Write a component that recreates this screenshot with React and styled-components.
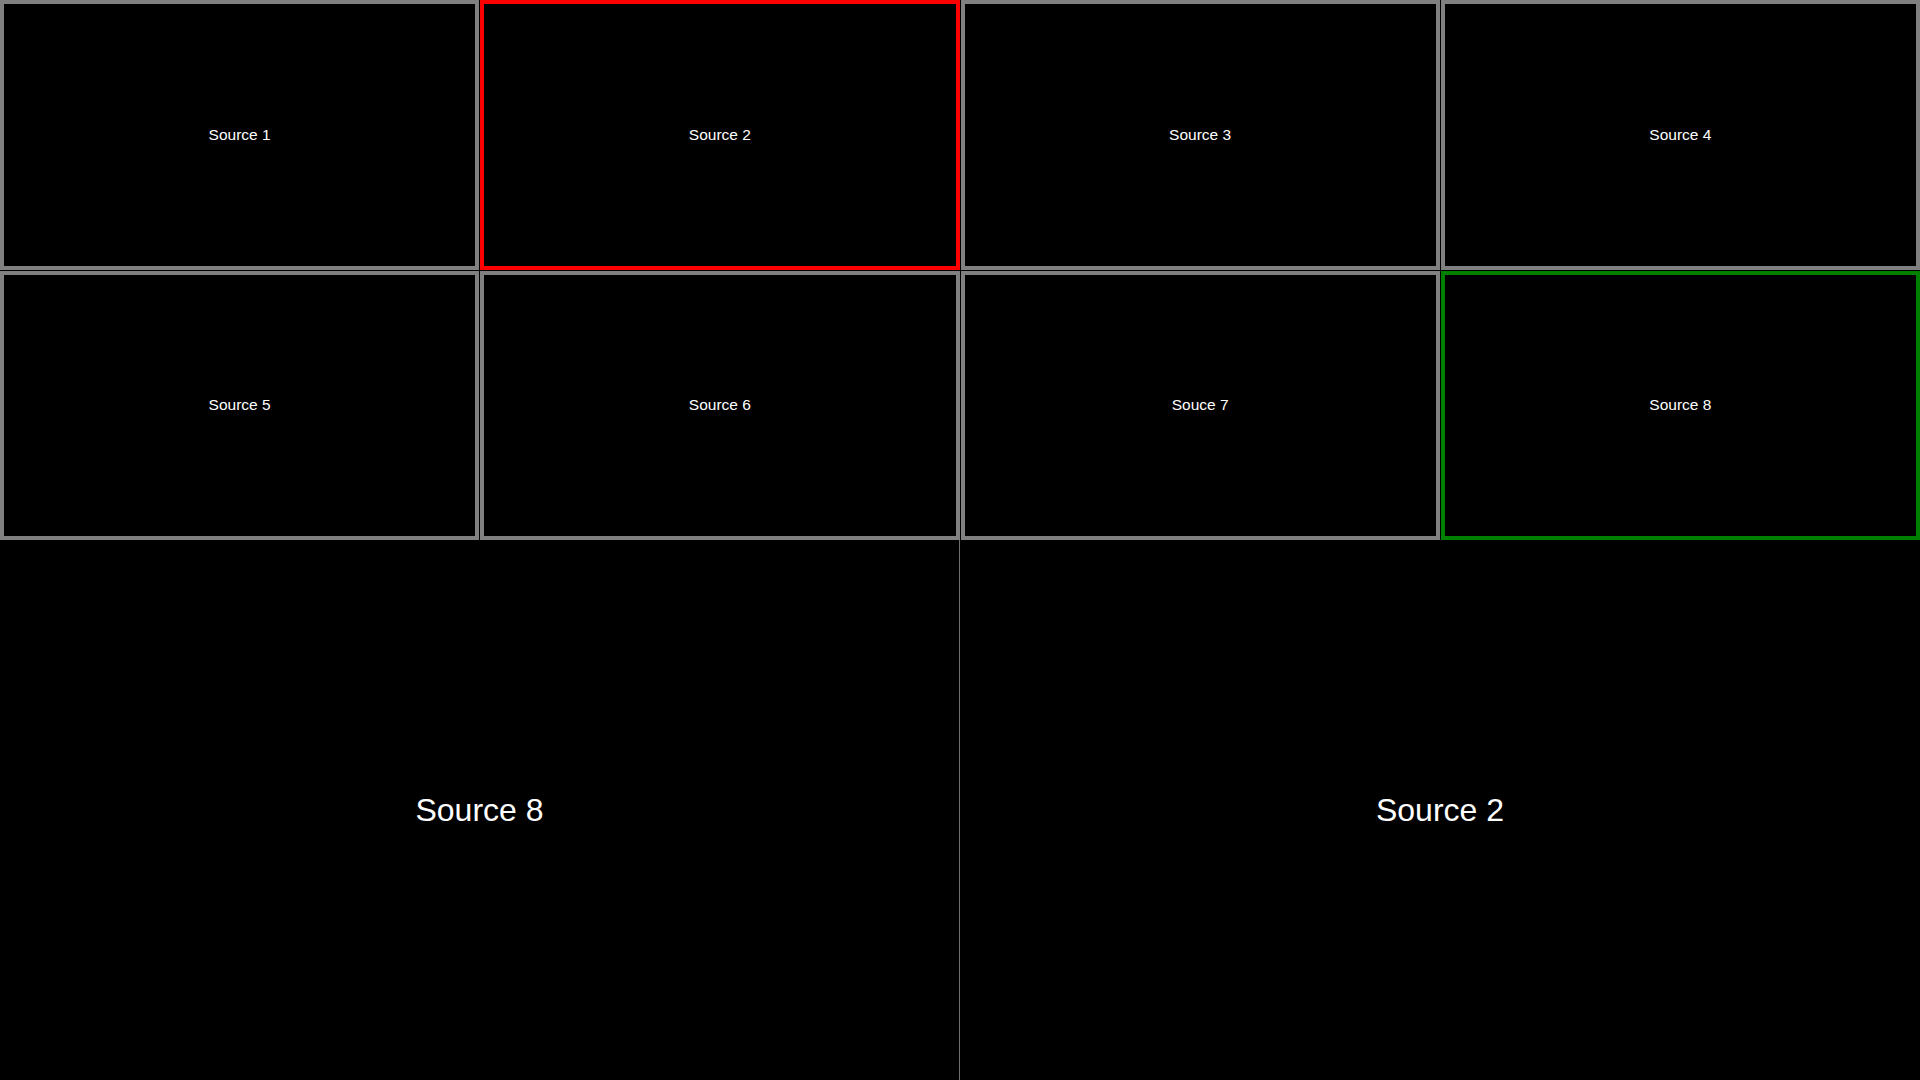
import React from "react";
import styled, { createGlobalStyle } from "styled-components";

const GlobalStyle = createGlobalStyle`
  html, body {
    margin: 0;
    padding: 0;
    background: #000;
    overflow: hidden;
  }
  body {
    font-family: "Liberation Sans", Arial, sans-serif;
  }
`;

const Screen = styled.div`
  width: 1920px;
  height: 1080px;
  background: #000;
  display: grid;
  grid-template-rows: 540px 540px;
`;

const PreviewGrid = styled.div`
  display: grid;
  grid-template-columns: repeat(4, 1fr);
  grid-template-rows: repeat(2, 1fr);
  gap: 1px;
`;

const borderColors = {
  idle: "#808080",
  program: "#ff0000",
  preview: "#008000",
};

const Tile = styled.div`
  box-sizing: border-box;
  border: 4px solid ${(p) => borderColors[p.$state]};
  display: flex;
  align-items: center;
  justify-content: center;
  color: #fff;
  font-size: 15.5px;
`;

const OutputRow = styled.div`
  display: grid;
  grid-template-columns: 959px 1px 1fr;
`;

const Divider = styled.div`
  background: #6e6e6e;
`;

const Output = styled.div`
  display: flex;
  align-items: center;
  justify-content: center;
  color: #fff;
  font-size: 32px;
`;

const sources = [
  { label: "Source 1", state: "idle" },
  { label: "Source 2", state: "program" },
  { label: "Source 3", state: "idle" },
  { label: "Source 4", state: "idle" },
  { label: "Source 5", state: "idle" },
  { label: "Source 6", state: "idle" },
  { label: "Souce 7", state: "idle" },
  { label: "Source 8", state: "preview" },
];

export default function App() {
  return (
    <>
      <GlobalStyle />
      <Screen>
        <PreviewGrid>
          {sources.map((s) => (
            <Tile key={s.label} $state={s.state}>
              {s.label}
            </Tile>
          ))}
        </PreviewGrid>
        <OutputRow>
          <Output>Source 8</Output>
          <Divider />
          <Output>Source 2</Output>
        </OutputRow>
      </Screen>
    </>
  );
}
